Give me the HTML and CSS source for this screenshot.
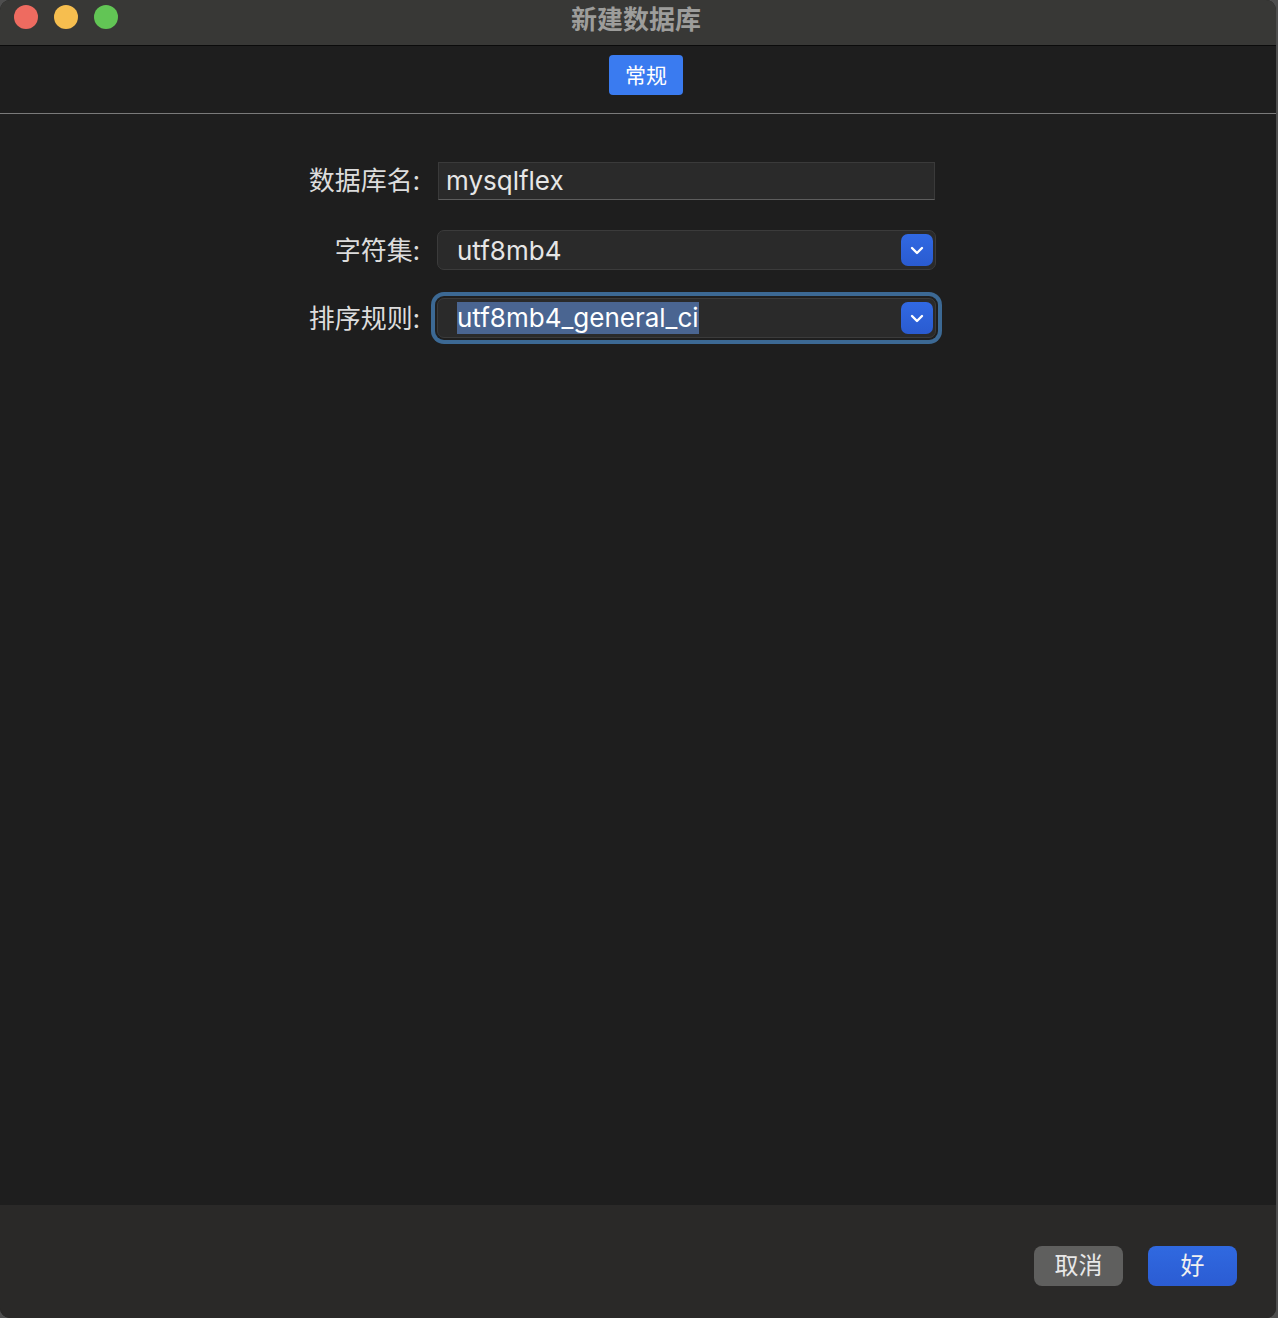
FILE: index.html
```html
<!DOCTYPE html>
<html lang="zh-CN">
<head>
<meta charset="utf-8">
<title>新建数据库</title>
<link rel="stylesheet" href="styles.css">
</head>
<body>
<div class="window">
  <header class="titlebar">
    <div class="lights">
      <span class="light red"></span>
      <span class="light yellow"></span>
      <span class="light green"></span>
    </div>
    <div class="title">新建数据库</div>
    <div class="spacer"></div>
  </header>
  <nav class="toolbar">
    <button class="tab active">常规</button>
  </nav>
  <main class="content">
    <div class="form">
      <div class="row row-name">
        <label class="label">数据库名:</label>
        <div class="field input">mysqlflex</div>
      </div>
      <div class="row row-charset">
        <label class="label">字符集:</label>
        <div class="field select">
          <span class="value">utf8mb4</span>
          <span class="chev"><svg width="14" height="9" viewBox="0 0 14 9"><path d="M2 2 L7 7 L12 2" fill="none" stroke="#fff" stroke-width="2.4" stroke-linecap="round" stroke-linejoin="round"/></svg></span>
        </div>
      </div>
      <div class="row row-collation">
        <label class="label">排序规则:</label>
        <div class="field select focused">
          <span class="value sel">utf8mb4_general_ci</span>
          <span class="chev"><svg width="14" height="9" viewBox="0 0 14 9"><path d="M2 2 L7 7 L12 2" fill="none" stroke="#fff" stroke-width="2.4" stroke-linecap="round" stroke-linejoin="round"/></svg></span>
        </div>
      </div>
    </div>
  </main>
  <footer class="footer">
    <button class="btn cancel">取消</button>
    <button class="btn ok">好</button>
  </footer>
</div>
</body>
</html>
```

FILE: styles.css
```css
* { box-sizing: border-box; }
html, body {
  margin: 0;
  padding: 0;
  background: #4e4e4e;
}
body {
  width: 1278px;
  height: 1318px;
  font-family: "Inter", "Noto Sans CJK SC", sans-serif;
  overflow: hidden;
}
.window {
  width: 1276px;
  height: 1318px;
  border-radius: 10px;
  overflow: hidden;
  display: flex;
  flex-direction: column;
  background: #1e1e1e;
}
.titlebar {
  height: 46px;
  flex: none;
  background: #383836;
  border-bottom: 1px solid #0b0b0b;
  display: grid;
  grid-template-columns: 1fr auto 1fr;
  grid-template-rows: 45px;
  align-items: start;
}
.lights {
  display: flex;
  gap: 16px;
  padding-left: 14px;
  padding-top: 5px;
}
.light {
  width: 24px;
  height: 24px;
  border-radius: 50%;
  display: block;
}
.red { background: #ee6b60; }
.yellow { background: #f6be4f; }
.green { background: #62c555; }
.title {
  font-family: "Noto Sans CJK SC", sans-serif;
  font-weight: 700;
  font-size: 26px;
  line-height: 36px;
  color: #9d9d9b;
  margin-left: -4px;
}
.toolbar {
  height: 68px;
  flex: none;
  border-bottom: 1px solid #7a7a7a;
  display: flex;
  justify-content: center;
  padding-top: 9px;
  padding-left: 16px;
}
.tab {
  width: 74px;
  height: 40px;
  border: none;
  border-radius: 4px;
  font-family: "Noto Sans CJK SC", sans-serif;
  font-size: 21px;
  color: #fff;
  background: transparent;
  padding: 0 0 3px;
}
.tab.active { background: #3a7bf0; }
.content {
  flex: 1;
  background: #1e1e1e;
}
.form {
  display: flex;
  flex-direction: column;
  padding-top: 48px;
  padding-left: 290px;
}
.row {
  display: flex;
  align-items: center;
  gap: 17px;
}
.row-name { height: 37px; margin-bottom: 31px; }
.row-charset { height: 40px; margin-bottom: 28px; }
.row-collation { height: 40px; }
.label {
  width: 130px;
  text-align: right;
  font-family: "Noto Sans CJK SC", sans-serif;
  font-size: 26px;
  color: #dcdcdc;
  line-height: 40px;
  padding-bottom: 3px;
  white-space: nowrap;
}
.field {
  font-size: 26px;
  color: #e6e6e6;
}
.input {
  margin-left: 1px;
  width: 497px;
  height: 38px;
  background: #2a2a2a;
  border: 1px solid #3a3a3a;
  border-bottom-color: #5d5d5d;
  padding-left: 7px;
  line-height: 35px;
}
.select {
  position: relative;
  width: 499px;
  height: 40px;
  background: #2a2a2a;
  border: 1px solid #3b3b3b;
  border-radius: 7px;
  padding-left: 19px;
  display: flex;
  align-items: center;
}
.select.focused {
  box-shadow: 0 0 0 2px #1f1f1f, 0 0 0 6px #3c6994;
}
.value.sel {
  background: #4a6591;
  color: #fff;
  line-height: 32px;
  display: inline-block;
}
.chev {
  position: absolute;
  right: 2px;
  top: 3px;
  width: 32px;
  height: 32px;
  border-radius: 7px;
  background: linear-gradient(#3169e3, #2a5bd0);
  display: flex;
  align-items: center;
  justify-content: center;
}
.footer {
  height: 113px;
  flex: none;
  background: #2a2928;
  display: flex;
  justify-content: flex-end;
  gap: 25px;
  padding-top: 41px;
  padding-right: 39px;
}
.btn {
  width: 89px;
  height: 40px;
  border: none;
  border-radius: 8px;
  font-family: "Noto Sans CJK SC", sans-serif;
  font-size: 24px;
  color: #e8e8e8;
  padding: 0 0 5px;
}
.cancel { background: #5f5f5e; }
.ok { background: linear-gradient(#3069e0, #2b5cd3); color: #f0f0f0; }
```
